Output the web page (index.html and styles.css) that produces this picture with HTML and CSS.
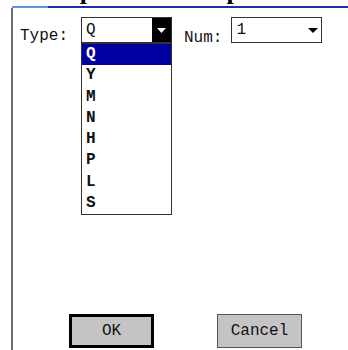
FILE: index.html
```html
<!DOCTYPE html>
<html>
<head>
  <title>Dropdown Example</title>
  <link rel="stylesheet" href="styles.css">
</head>
<body>
  <div class="title"><span>Dropdown Example</span></div>
  <div class="rule"></div>

  <div class="panel">
    <div class="row">
      <span class="label label-type">Type:</span>
      <div class="combo combo-open">
        <span class="value">Q</span>
        <span class="arrow-btn">
          <svg width="9" height="5" viewBox="0 0 9 5"><path d="M0 0H9L4.5 5Z" fill="#fff"/></svg>
        </span>
        <ul class="list">
          <li class="selected">Q</li>
          <li>Y</li>
          <li>M</li>
          <li>N</li>
          <li>H</li>
          <li>P</li>
          <li>L</li>
          <li>S</li>
        </ul>
      </div>

      <span class="label label-num">Num:</span>
      <div class="combo combo-num">
        <span class="value">1</span>
        <svg class="arrow" width="10" height="5" viewBox="0 0 10 5"><path d="M0 0H10L5 5Z" fill="#000"/></svg>
      </div>
    </div>

    <div class="buttons">
      <button type="button" class="btn btn-default">OK</button>
      <button type="button" class="btn">Cancel</button>
    </div>
  </div>
</body>
</html>
```

FILE: styles.css
```css
body {
  margin: 0;
  width: 348px;
  height: 350px;
  overflow: hidden;
  background: #fff;
  color: #111;
  font-family: "Liberation Mono", monospace;
}

/* page title, only its descenders show above the rule */
.title {
  height: 6px;
  overflow: hidden;
  display: flex;
  align-items: flex-end;
  padding-left: 37px;
  font: bold 26px/1.15 "Liberation Serif", serif;
  color: #000;
}

.rule {
  margin-left: 12px;
  height: 2px;
  background: linear-gradient(to right, #5d95dc 0 36px, #1633a3 36px);
}

.panel {
  margin-left: 11px;
  border-left: 2px solid #707070;
  height: 342px;
  box-sizing: border-box;
  display: flex;
  flex-direction: column;
}

.row {
  display: flex;
  align-items: flex-start;
  padding: 9px 0 0 7px;
}

.label {
  font-size: 16px;
  line-height: 16px;
}

.label-type {
  margin-top: 11px;
}

.label-num {
  margin-top: 13px;
  margin-left: 12px;
}

.combo {
  position: relative;
  width: 91px;
  height: 26px;
  box-sizing: border-box;
  border: 1px solid #333;
  background: #fff;
  display: flex;
  align-items: center;
  margin-left: 13px;
}

.combo-num {
  margin-left: 9px;
}

.value {
  flex: 1;
  padding-left: 4px;
  font-size: 16px;
  line-height: 16px;
}

.arrow-btn {
  width: 19px;
  align-self: stretch;
  background: #000;
  display: flex;
  align-items: center;
  justify-content: center;
}

.arrow {
  margin-right: 3px;
}

.list {
  position: absolute;
  left: -1px;
  top: 25px;
  width: 91px;
  box-sizing: border-box;
  margin: 0;
  padding: 0;
  list-style: none;
  border: 1px solid #333;
  background: #fff;
}

.list li {
  height: 21.25px;
  line-height: 21.25px;
  padding-left: 4px;
  font-size: 16px;
  font-weight: bold;
}

.list li.selected {
  background: #0000a0;
  color: #fff;
}

.buttons {
  margin-top: auto;
  display: flex;
  gap: 63px;
  padding: 0 0 2px 56px;
}

.btn {
  width: 85px;
  height: 34px;
  box-sizing: border-box;
  padding: 0;
  background: #c6c3c6;
  border: 1px solid #555;
  font-family: "Liberation Mono", monospace;
  font-size: 16px;
  color: #111;
}

.btn-default {
  border: 3px solid #000;
}
```
